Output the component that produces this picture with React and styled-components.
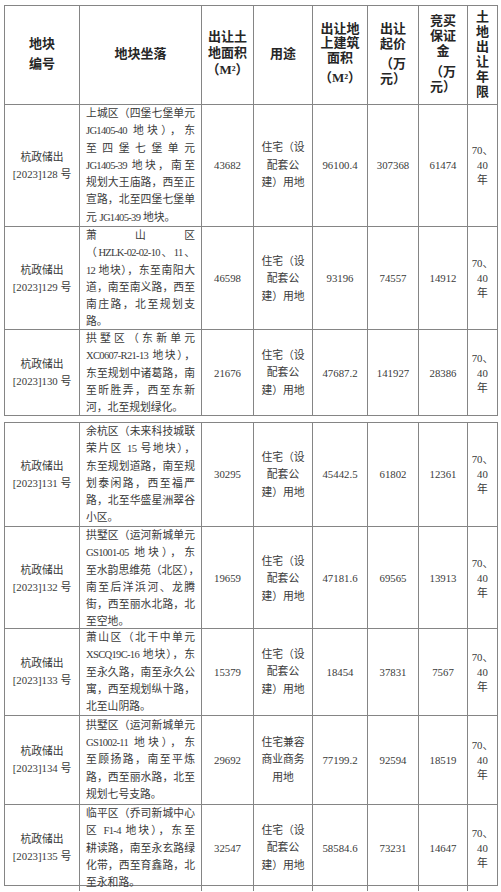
import React from "react";
import styled, { createGlobalStyle } from "styled-components";

const GlobalStyle = createGlobalStyle`
  body {
    margin: 0;
    background: #fff;
    font-family: "Liberation Serif", "Noto Sans CJK SC", serif;
    color: #3a3a3a;
  }
`;

const LINE = "#858585";
const COLS = "75px 122px 52px 59px 55px 51px 49px 29px";

const Page = styled.div`
  padding: 5px 0 8px 4px;
`;

const Sheet = styled.div`
  width: 494px;
  box-sizing: border-box;
  border: 1px solid ${LINE};
  border-bottom: none;
  & + & {
    margin-top: 6px;
  }
`;

const Row = styled.div`
  display: grid;
  grid-template-columns: ${COLS};
  height: ${(p) => p.$h}px;
  box-sizing: border-box;
  border-bottom: 1px solid ${LINE};
`;

const Cell = styled.div`
  display: flex;
  flex-direction: column;
  align-items: center;
  justify-content: center;
  text-align: center;
  border-right: 1px solid ${LINE};
  font-size: 10.8px;
  line-height: ${(p) => p.$lh || 17}px;
  white-space: nowrap;
  &:last-child {
    border-right: none;
  }
`;

const HeadCell = styled(Cell)`
  font-size: 13px;
  font-weight: 700;
  color: #262626;
  line-height: ${(p) => p.$lh || 15}px;
  padding-bottom: 3px;
`;

const Unit = styled.span`
  display: block;
  margin-top: ${(p) => p.$gap || 0}px;
`;

const AddrCell = styled(Cell)`
  align-items: stretch;
  padding: 0 6px;
  line-height: 17.3px;
`;

const Line = styled.div`
  text-align: justify;
  text-align-last: ${(p) => (p.$last ? "left" : "justify")};
`;

// latin runs inside the address are set narrow, like the half-width source font
const Code = styled.span`
  font-size: 10.6px;
  letter-spacing: -0.7px;
`;

const lots = [
  {
    no: "128",
    h: 122,
    addr: [
      "上城区（四堡七堡单元",
      "JG1405-40 地块），东",
      "至四堡七堡单元",
      "JG1405-39 地块，南至",
      "规划大王庙路，西至正",
      "宣路，北至四堡七堡单",
      "元 JG1405-39 地块。",
    ],
    area: "43682",
    use: ["住宅（设", "配套公", "建）用地"],
    floor: "96100.4",
    price: "307368",
    deposit: "61474",
  },
  {
    no: "129",
    h: 103,
    addr: [
      "萧山区",
      "（HZLK-02-02-10、11、",
      "12 地块），东至南阳大",
      "道，南至南义路，西至",
      "南庄路，北至规划支",
      "路。",
    ],
    area: "46598",
    use: ["住宅（设", "配套公", "建）用地"],
    floor: "93196",
    price: "74557",
    deposit: "14912",
  },
  {
    no: "130",
    h: 86,
    addr: [
      "拱墅区（东新单元",
      "XC0607-R21-13 地块），",
      "东至规划中诸葛路，南",
      "至昕胜弄，西至东新",
      "河，北至规划绿化。",
    ],
    area: "21676",
    use: ["住宅（设", "配套公", "建）用地"],
    floor: "47687.2",
    price: "141927",
    deposit: "28386",
  },
  {
    no: "131",
    h: 104,
    addr: [
      "余杭区（未来科技城联",
      "荣片区 15 号地块），",
      "东至规划道路，南至规",
      "划泰闲路，西至福严",
      "路，北至华盛星洲翠谷",
      "小区。",
    ],
    area: "30295",
    use: ["住宅（设", "配套公", "建）用地"],
    floor: "45442.5",
    price: "61802",
    deposit: "12361",
  },
  {
    no: "132",
    h: 102,
    addr: [
      "拱墅区（运河新城单元",
      "GS1001-05 地块），东",
      "至水韵思维苑（北区），",
      "南至后洋浜河、龙腾",
      "街，西至丽水北路，北",
      "至空地。",
    ],
    area: "19659",
    use: ["住宅（设", "配套公", "建）用地"],
    floor: "47181.6",
    price: "69565",
    deposit: "13913",
  },
  {
    no: "133",
    h: 87,
    addr: [
      "萧山区（北干中单元",
      "XSCQ19C-16 地块），东",
      "至永久路，南至永久公",
      "寓，西至规划纵十路，",
      "北至山阴路。",
    ],
    area: "15379",
    use: ["住宅（设", "配套公", "建）用地"],
    floor: "18454",
    price: "37831",
    deposit: "7567",
  },
  {
    no: "134",
    h: 89,
    addr: [
      "拱墅区（运河新城单元",
      "GS1002-11 地块），东",
      "至顾扬路，南至平炼",
      "路，西至丽水路，北至",
      "规划七号支路。",
    ],
    area: "29692",
    use: ["住宅兼容", "商业商务", "用地"],
    floor: "77199.2",
    price: "92594",
    deposit: "18519",
  },
  {
    no: "135",
    h: 81,
    addr: [
      "临平区（乔司新城中心",
      "区 F1-4 地块），东至",
      "耕读路，南至永玄路绿",
      "化带，西至育鑫路，北",
      "至永和路。",
    ],
    area: "32547",
    use: ["住宅（设", "配套公", "建）用地"],
    floor: "58584.6",
    price: "73231",
    deposit: "14647",
  },
];

function renderText(text) {
  return text
    .split(/([A-Za-z0-9][A-Za-z0-9-]*)/)
    .map((part, i) =>
      /^[A-Za-z0-9]/.test(part) ? <Code key={i}>{part}</Code> : part
    );
}

function Stack({ lines }) {
  return lines.map((l, i) => <div key={i}>{l}</div>);
}

function HeaderRow() {
  return (
    <Row $h={99}>
      <HeadCell $lh={20}>
        <Stack lines={["地块", "编号"]} />
      </HeadCell>
      <HeadCell>地块坐落</HeadCell>
      <HeadCell $lh={16}>
        <Stack lines={["出让土", "地面积"]} />
        <Unit $gap={1}>（M²）</Unit>
      </HeadCell>
      <HeadCell>用途</HeadCell>
      <HeadCell $lh={14.5}>
        <Stack lines={["出让地", "上建筑", "面积"]} />
        <Unit $gap={6}>（M²）</Unit>
      </HeadCell>
      <HeadCell>
        <Stack lines={["出让", "起价"]} />
        <Unit $gap={5}>（万</Unit>
        <Unit>元）</Unit>
      </HeadCell>
      <HeadCell>
        <Stack lines={["竞买", "保证", "金"]} />
        <Unit $gap={6}>（万</Unit>
        <Unit>元）</Unit>
      </HeadCell>
      <HeadCell>
        <Stack lines={["土", "地", "出", "让", "年", "限"]} />
      </HeadCell>
    </Row>
  );
}

function LotRow({ lot }) {
  return (
    <Row $h={lot.h}>
      <Cell $lh={17}>
        <div>杭政储出</div>
        <div>[2023]{lot.no} 号</div>
      </Cell>
      <AddrCell>
        {lot.addr.map((line, i) => (
          <Line key={i} $last={i === lot.addr.length - 1}>
            {renderText(line)}
          </Line>
        ))}
      </AddrCell>
      <Cell>{lot.area}</Cell>
      <Cell $lh={17.5}>
        <Stack lines={lot.use} />
      </Cell>
      <Cell>{lot.floor}</Cell>
      <Cell>{lot.price}</Cell>
      <Cell>{lot.deposit}</Cell>
      <Cell $lh={15}>
        <Stack lines={["70、", "40", "年"]} />
      </Cell>
    </Row>
  );
}

export default function App() {
  return (
    <>
      <GlobalStyle />
      <Page>
        <Sheet>
          <HeaderRow />
          {lots.slice(0, 3).map((lot) => (
            <LotRow key={lot.no} lot={lot} />
          ))}
        </Sheet>
        <Sheet>
          {lots.slice(3).map((lot) => (
            <LotRow key={lot.no} lot={lot} />
          ))}
        </Sheet>
      </Page>
    </>
  );
}
